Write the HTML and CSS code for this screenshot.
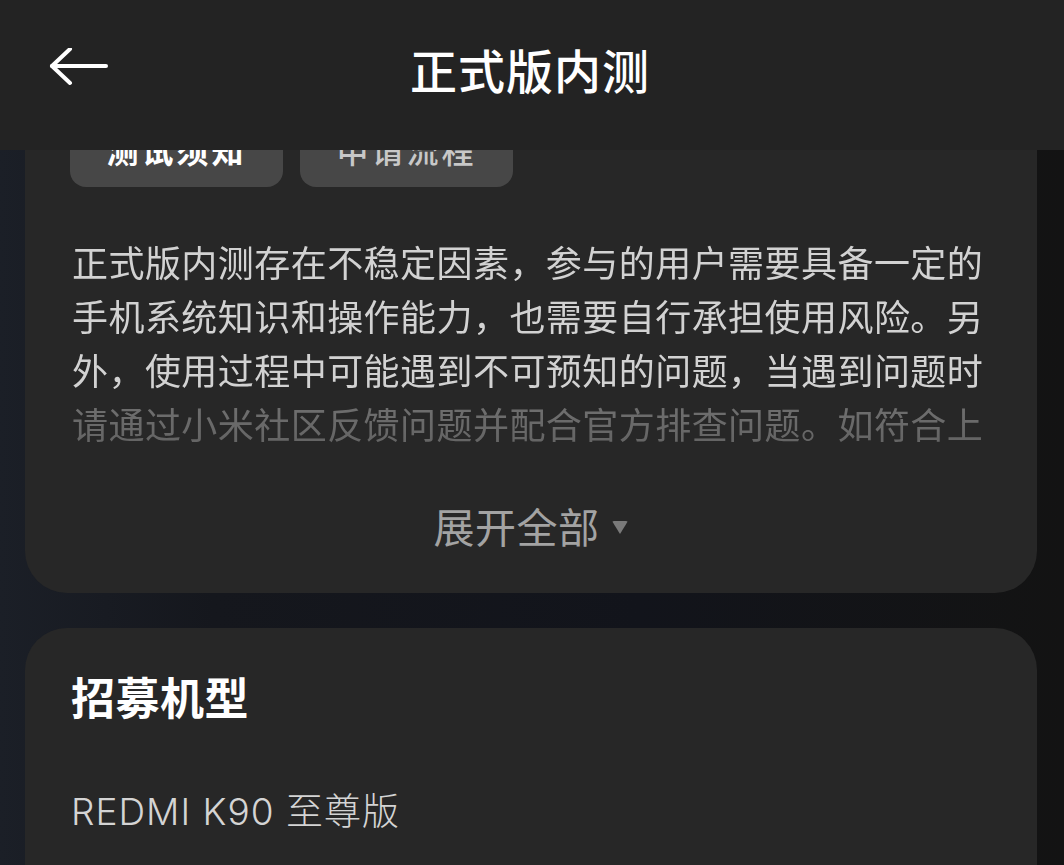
FILE: index.html
```html
<!DOCTYPE html>
<html lang="zh-CN">
<head>
<meta charset="utf-8">
<title>正式版内测</title>
<link rel="stylesheet" href="styles.css">
</head>
<body>
<div class="screen">
  <header class="topbar">
    <button class="back" aria-label="返回">
      <svg width="60" height="44" viewBox="0 0 60 44" fill="none" stroke="#ffffff" stroke-width="4" stroke-linecap="round" stroke-linejoin="round">
        <path d="M3 18 H57"/>
        <path d="M21 1 L3 18 L21 35"/>
      </svg>
    </button>
    <h1 class="title">正式版内测</h1>
  </header>

  <main class="scroller">
    <div class="scroll-inner">
      <section class="card intro">
        <div class="tabs">
          <span class="tab active">测试须知</span>
          <span class="tab">申请流程</span>
        </div>
        <p class="notice">正式版内测存在不稳定因素，参与的用户需要具备一定的手机系统知识和操作能力，也需要自行承担使用风险。另外，使用过程中可能遇到不可预知的问题，当遇到问题时请通过小米社区反馈问题并配合官方排查问题。如符合上</p>
        <div class="expand">展开全部<span class="caret"></span></div>
      </section>

      <section class="card models">
        <h2 class="card-title">招募机型</h2>
        <div class="model">REDMI K90 至尊版</div>
      </section>
    </div>
  </main>
</div>
</body>
</html>
```

FILE: styles.css
```css
* {
  box-sizing: border-box;
}

html, body {
  margin: 0;
  padding: 0;
}

body {
  width: 1064px;
  height: 865px;
  overflow: hidden;
  font-family: "Noto Sans CJK SC", "Noto Sans", sans-serif;
  background: linear-gradient(90deg, #1b1f27 0%, #15171d 20%, #12141b 60%, #131313 100%);
}

.screen {
  display: flex;
  flex-direction: column;
  height: 865px;
}

/* top bar */
.topbar {
  position: relative;
  z-index: 2;
  flex: 0 0 150px;
  height: 150px;
  background: #232323;
  display: flex;
  align-items: center;
  justify-content: center;
  padding-bottom: 14px;
}

.back {
  position: absolute;
  left: 49px;
  top: 48px;
  width: 60px;
  height: 44px;
  padding: 0;
  border: 0;
  background: none;
  display: block;
}

.back svg {
  display: block;
}

.title {
  margin: 0 0 0 -4px;
  font-size: 47px;
  font-weight: 500;
  color: #ffffff;
  letter-spacing: 1px;
  line-height: 1;
}

/* scrolled content */
.scroller {
  flex: 1;
  overflow: hidden;
}

.scroll-inner {
  display: flex;
  flex-direction: column;
  gap: 35px;
  padding: 0 27px 0 25px;
  margin-top: -70px;
}

.card {
  background: #272727;
  border-radius: 42px;
}

.intro {
  padding: 37px 46px 41px 45px;
}

.tabs {
  display: flex;
  gap: 17px;
}

.tab {
  width: 213px;
  height: 70px;
  border-radius: 16px;
  background: #474747;
  color: #c8c8c8;
  font-size: 32px;
  font-weight: 500;
  display: flex;
  align-items: center;
  justify-content: center;
  letter-spacing: 3px;
  padding-bottom: 6px;
}

.tab.active {
  color: #ffffff;
  font-weight: 700;
}

.notice {
  margin: 47px 0 0 2px;
  font-size: 36px;
  line-height: 54px;
  letter-spacing: 0.45px;
  color: #d2d2d2;
  height: 216px;
  overflow: hidden;
  -webkit-mask-image: linear-gradient(180deg, #000 0%, #000 74%, rgba(0,0,0,0.42) 80%, rgba(0,0,0,0.35) 100%);
  mask-image: linear-gradient(180deg, #000 0%, #000 74%, rgba(0,0,0,0.42) 80%, rgba(0,0,0,0.35) 100%);
}

.expand {
  margin-top: 48px;
  height: 54px;
  display: flex;
  align-items: center;
  justify-content: center;
  font-size: 41px;
  color: #a3a3a3;
  letter-spacing: 0.5px;
}

.caret {
  width: 0;
  height: 0;
  margin-left: 12px;
  margin-top: 4px;
  border-left: 8px solid transparent;
  border-right: 8px solid transparent;
  border-top: 13px solid #7a7a7a;
  border-radius: 2px;
}

.models {
  padding: 40px 46px 60px 46px;
  min-height: 300px;
}

.card-title {
  margin: 0;
  font-size: 44px;
  font-weight: 700;
  color: #ffffff;
  letter-spacing: 0.5px;
  line-height: 56px;
}

.model {
  margin-top: 64px;
  font-family: "Inter", "Noto Sans CJK SC", sans-serif;
  font-size: 37px;
  line-height: 48px;
  letter-spacing: 1px;
  color: #d4d4d4;
  font-weight: 300;
}
```
